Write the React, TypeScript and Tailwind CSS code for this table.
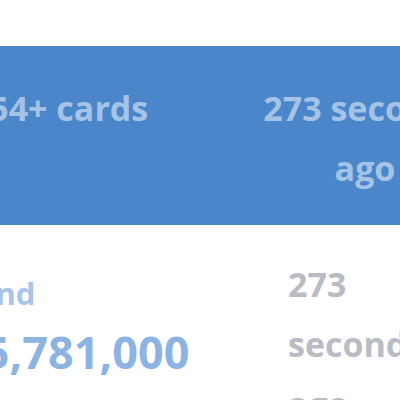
import * as React from 'react';

const App = () => {
    return (
        <div className="w-[400px] h-[400px] overflow-hidden bg-white font-['Open_Sans',sans-serif] font-bold">
            <div className="h-[46px]" />

            {/* stats band */}
            <div className="h-[179px] bg-[#4a86c9] overflow-hidden">
                <div className="flex -ml-[94px] pt-[32px] text-[34px] leading-[60px] text-[#a5c3e6] text-center">
                    <div className="w-[306px] shrink-0 px-[33px]">254+ cards</div>
                    <div className="w-[306px] shrink-0 px-[33px]">273 seconds ago</div>
                </div>
            </div>

            {/* totals */}
            <div className="flex -ml-[42px]">
                <div className="w-[330px] shrink-0 pt-[48px]">
                    <div className="text-[31px] leading-[40px] text-[#a9c4e8] whitespace-nowrap">Fund</div>
                    <div className="mt-[9px] text-[45px] leading-[60px] text-[#8db3e2] whitespace-nowrap">$5,781,000</div>
                </div>
                <div className="w-[150px] shrink-0 pt-[29px] text-[34px] leading-[60px] text-[#b9bcc4]">
                    273 seconds ago
                </div>
            </div>
        </div>
    );
};

export default App;
